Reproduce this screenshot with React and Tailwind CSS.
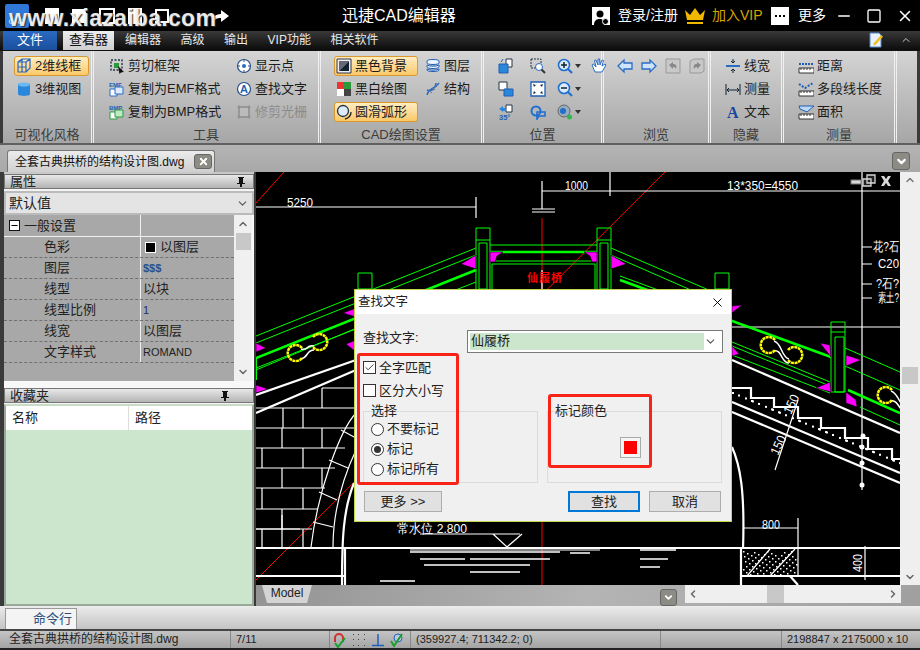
import React from "react";
import { ChevronDown, ChevronUp, ChevronRight, ChevronLeft, Check, X, Minus, Square } from "lucide-react";

const Pin = () => (
  <svg width="10" height="12" viewBox="0 0 10 12"><path d="M2 1h6v1H7v5h2v1H6v3H4V8H1V7h2V2H2z" fill="#111" /></svg>
);

const TabIcon = ({ children, size = 16 }) => (
  <svg width={size} height={size} viewBox="0 0 16 16" className="shrink-0">{children}</svg>
);

const icons = {
  wire: <TabIcon><path d="M2 4l4-3h8v9l-4 4H2zM2 4h8v10M10 4l4-3M2 9h8M6 1v13" fill="none" stroke="#2467c4" strokeWidth="1.2" /></TabIcon>,
  cyl: <TabIcon><path d="M2 3.5C2 1.5 14 1.5 14 3.5V13C14 15.5 2 15.5 2 13z" fill="#2a88dc" /><ellipse cx="8" cy="3.5" rx="6" ry="2" fill="#6bb9f2" /></TabIcon>,
  clip: <TabIcon><path d="M2 2h11v10H2z" fill="none" stroke="#234" strokeWidth="1.4" strokeDasharray="2 1.5" /><path d="M5 5h5v5H5z" fill="#2a9a3a" /><path d="M9 8l6 6-3 .5-1.5 1.5z" fill="#111" /></TabIcon>,
  emf: <TabIcon><text x="0" y="6" fontSize="6" fontWeight="700" fill="#1f5fb4">EMF</text><path d="M1 8h7v7H1z" fill="#fff" stroke="#2a6cc4" /><path d="M6 6h8v7H6z" fill="#dceafa" stroke="#2a6cc4" /></TabIcon>,
  bmp: <TabIcon><text x="0" y="6" fontSize="6" fontWeight="700" fill="#1f5fb4">BMP</text><path d="M1 8h7v7H1z" fill="#fff" stroke="#2a9a3a" /><path d="M6 6h8v7H6z" fill="#bfe8c4" stroke="#2a9a3a" /></TabIcon>,
  point: <TabIcon><circle cx="8" cy="8" r="6.5" fill="#fff" stroke="#274d86" strokeWidth="1.2" /><circle cx="8" cy="8" r="2" fill="#2a6cc4" /><path d="M8 1v3M8 12v3M1 8h3M12 8h3" stroke="#274d86" /></TabIcon>,
  find: <TabIcon><circle cx="8" cy="8" r="6.5" fill="#fff" stroke="#274d86" strokeWidth="1.2" /><text x="4" y="12" fontSize="11" fontWeight="700" fill="#1f5fb4">A</text></TabIcon>,
  raster: <TabIcon><path d="M3 3h10v10H3z" fill="#bbb" stroke="#888" /><path d="M1 3h14M1 13h14M3 1v14M13 1v14" stroke="#888" strokeWidth=".7" /></TabIcon>,
  black: <TabIcon><path d="M1 1h14v14H1z" fill="#eee" stroke="#334" /><path d="M3 3h10L3 13z" fill="#667" /><path d="M13 3v10H3z" fill="#123" /></TabIcon>,
  bw: <TabIcon><path d="M1 1h7v7H1z" fill="#e33" /><path d="M8 1h7v7H8z" fill="#2a9a3a" /><path d="M1 8h7v7H1z" fill="#fff" /><path d="M8 8h7v7H8z" fill="#444" /></TabIcon>,
  arc: <TabIcon><circle cx="7" cy="7" r="5.5" fill="#dceafa" stroke="#234" strokeWidth="1.3" /><path d="M15 8c0 4-2 6-6 7" fill="none" stroke="#222" strokeWidth="1.3" /></TabIcon>,
  layer: <TabIcon><path d="M2 3c0-2 12-2 12 0v2c0 2-12 2-12 0zM2 7c3 1.600 9 1.600 12 0v2c0 2-12 2-12 0zM2 11c3 1.600 9 1.600 12 0v1c0 2-12 2-12 0z" fill="#eef4fb" stroke="#1f5fb4" /></TabIcon>,
  dna: <TabIcon><path d="M2 14C4 6 8 10 14 2M2 9c5 2 8-1 9-7" fill="none" stroke="#2a6cc4" strokeWidth="1.4" /><path d="M4 10l3 2M7 7l3 2M10 4l2 2" stroke="#777" /></TabIcon>,
  lw: <TabIcon><path d="M8 1v4M8 11v4M6 3l2 2 2-2M6 13l2-2 2 2" fill="none" stroke="#123" /><path d="M1 7h14v2H1z" fill="#2a6cc4" /></TabIcon>,
  meas: <TabIcon><path d="M1 3v11M15 3v11M2 9h12M4 7L2 9l2 2M12 7l2 2-2 2" fill="none" stroke="#123" /></TabIcon>,
  text: <TabIcon><text x="2" y="14" fontSize="16" fontWeight="700" fontFamily="Liberation Serif" fill="#1746a0">A</text></TabIcon>,
  dist: <TabIcon><path d="M1 10h15v5H1z" fill="#fff" stroke="#333" /><path d="M3 10v2M6 10v2M9 10v2M12 10v2" stroke="#333" /><path d="M1 6h15" stroke="#1f5fb4" strokeWidth="2" strokeDasharray="2 1" /></TabIcon>,
  poly: <TabIcon><path d="M1 10h15v5H1z" fill="#fff" stroke="#333" /><path d="M3 10v2M6 10v2M9 10v2M12 10v2" stroke="#333" /><path d="M1 3l6 4 8-5" stroke="#1f5fb4" strokeWidth="2" strokeDasharray="2 1.500" fill="none" /></TabIcon>,
  area: <TabIcon><path d="M1 10h15v5H1z" fill="#fff" stroke="#333" /><path d="M3 10v2M6 10v2M9 10v2M12 10v2" stroke="#333" /><path d="M1 2h15l-7 6-7-3z" fill="#bcd8f6" stroke="#1f5fb4" /></TabIcon>,
  copyA: <TabIcon><path d="M8 1h6v8H8z" fill="#fff" stroke="#234" /><path d="M1 6h9v9H1z" fill="#2a88dc" stroke="#1f5fb4" /><path d="M3 4l2-3" stroke="#1f5fb4" /></TabIcon>,
  zoomW: <TabIcon><path d="M1 1h10v9H1z" fill="none" stroke="#234" strokeDasharray="2 1" /><circle cx="9" cy="9" r="3.500" fill="#fff" stroke="#2a6cc4" /><path d="M11.500 11.500L15 15" stroke="#333" strokeWidth="2" /></TabIcon>,
  zoomIn: <TabIcon><circle cx="7" cy="7" r="5.500" fill="#dceafa" stroke="#1f6fd0" strokeWidth="1.600" /><path d="M4 7h6M7 4v6" stroke="#123" strokeWidth="1.500" /><path d="M11 11l4 4" stroke="#1f6fd0" strokeWidth="2.200" /></TabIcon>,
  zoomOut: <TabIcon><circle cx="7" cy="7" r="5.500" fill="#dceafa" stroke="#1f6fd0" strokeWidth="1.600" /><path d="M4 7h6" stroke="#123" strokeWidth="1.500" /><path d="M11 11l4 4" stroke="#1f6fd0" strokeWidth="2.200" /></TabIcon>,
  hand: <TabIcon><path d="M4 14L1 7l1.500-1L5 9 3.500 2.500 5 2l2 5V1h1.500l.5 6 2-5 1.500.5L11 8l3-2 1 1-4 7z" fill="#fff" stroke="#2a6cc4" /></TabIcon>,
  copyB: <TabIcon><path d="M1 1h8v8H1z" fill="#fff" stroke="#234" /><path d="M6 8h9v7H6z" fill="#2a88dc" stroke="#1f5fb4" /></TabIcon>,
  fit: <TabIcon><path d="M1 1h14v14H1z" fill="#fff" stroke="#1f5fb4" strokeWidth="1.300" /><path d="M3 3l3 1-2 2zM13 3l-1 3-2-2zM3 13l1-3 2 2zM13 13l-3-1 2-2z" fill="#234" /></TabIcon>,
  rot: <TabIcon><path d="M8 1h6v7H8z" fill="#fff" stroke="#234" /><path d="M1 5l4-3v2h3v3H5v1z" fill="#2a88dc" /><text x="1" y="15.500" fontSize="7.500" fontWeight="700" fill="#1f5fb4">35°</text></TabIcon>,
  loop: <TabIcon><circle cx="6" cy="7" r="4.500" fill="none" stroke="#1f6fd0" strokeWidth="2" /><path d="M7 8h8v4H9l-2 3z" fill="none" stroke="#1f6fd0" strokeWidth="1.600" /></TabIcon>,
  globe: <TabIcon><circle cx="7" cy="7" r="6" fill="#9ab" stroke="#666" /><circle cx="6" cy="7" r="3" fill="#1f6fd0" /><circle cx="12.500" cy="13" r="2.500" fill="#2db84a" /></TabIcon>,
  left: <TabIcon><path d="M1 8l6-6v3h8v6H7v3z" fill="#cfe3fa" stroke="#2a6cc4" strokeWidth="1.300" /></TabIcon>,
  right: <TabIcon><path d="M15 8L9 2v3H1v6h8v3z" fill="#cfe3fa" stroke="#2a6cc4" strokeWidth="1.300" /></TabIcon>,
  undoG: <TabIcon><path d="M1 1h14v14H1z" fill="#c8c8c8" stroke="#999" /><path d="M4 7l4-3v2c3 0 4 2 3 5-1-2-2-2-3-2v2z" fill="#888" /></TabIcon>,
  redoG: <TabIcon><path d="M1 3l4-2h10v12l-3 2H1z" fill="#c8c8c8" stroke="#999" /><path d="M12 7L8 4v2C5 6 4 8 5 11c1-2 2-2 3-2v2z" fill="#888" /></TabIcon>,
};

const Tool = ({ icon, label, active, disabled, className = "" }) => (
  <div
    className={`flex items-center gap-[3px] h-[20px] mb-[3px] text-[13px] whitespace-nowrap ${
      active ? "rounded-[3px] border border-[#d89a30] bg-gradient-to-b from-[#ffedc0] to-[#fbc868] px-[1px]" : "px-[2px]"
    } ${disabled ? "text-[#8c8c8c]" : "text-[#1c1c1c]"} ${className}`}
  >
    {icons[icon]}
    <span>{label}</span>
  </div>
);

const Group = ({ label, width, children, className = "" }) => (
  <div className="flex flex-col shrink-0 border-r-[3px] border-double border-[#f0f0f0]" style={{ width }}>
    <div className={`h-[71px] pt-[5px] ${className}`}>{children}</div>
    <div className="h-[21px] text-center text-[13px] leading-[25px] text-[#3c3c3c]">{label}</div>
  </div>
);

const IconCell = ({ icon, caret, dim }) => (
  <div className={`flex items-center justify-start h-[23px] ${dim ? "opacity-90" : ""}`}>
    {icons[icon]}
    {caret && <span className="ml-[2px] border-x-[3.500px] border-t-[4px] border-x-transparent border-t-[#333]" />}
  </div>
);

function TitleBar() {
  return (
    <div className="relative h-[31px] bg-black flex items-center text-white">
      <div className="ml-[5px] w-[24px] h-[24px] rounded-[2px] bg-[#2f78d8] flex items-end justify-center text-[8px] leading-[12px] text-[#d8e8ff]">CAD</div>
      <div className="flex items-center gap-[13px] ml-[16px] text-white">
        <span className="w-[14px] h-[16px] bg-white" />
        <span className="w-[14px] h-[14px] bg-white" />
        <span className="w-[16px] h-[16px] border-2 border-white" />
        <span className="w-[14px] h-[16px] bg-white" />
        <span className="w-[14px] h-[14px] border-2 border-white" />
        <span className="w-[16px] h-[14px]" />
        <svg width="18" height="16" viewBox="0 0 18 16" className="mt-[2px]"><path d="M10 1l8 6-8 6V9C6 9 3 10 1 15 1 9 4 5 10 5z" fill="#fff" /></svg>
      </div>
      <span className="absolute left-[9px] top-[1px] text-[23px] font-bold text-white/90 tracking-[0.3px] [text-shadow:1px_1px_1px_#333]">www.xiazaiba.com</span>
      <span className="absolute left-[342px] top-[5px] text-[16px] leading-[22px]">迅捷CAD编辑器</span>
      <div className="ml-auto flex items-center h-full text-[14px]">
        <div className="w-[18px] h-[18px] bg-white flex items-end justify-center">
          <svg width="16" height="16" viewBox="0 0 16 16"><circle cx="7" cy="5" r="3.500" fill="#000" /><path d="M1 16c0-5 3-6 6-6s4 2 4 6z" fill="#000" /><circle cx="12.500" cy="12.500" r="3" fill="#000" stroke="#fff" /></svg>
        </div>
        <span className="ml-[8px] w-[66px]">登录/注册</span>
        <svg width="22" height="18" viewBox="0 0 22 18"><path d="M1 3l5 5 5-7 5 7 5-5-2 10H3z" fill="#f0b800" /><path d="M3 15h16v2H3z" fill="#f0b800" /></svg>
        <span className="ml-[6px] w-[59px] text-[#d8a400]">加入VIP</span>
        <div className="w-[18px] h-[18px] bg-white flex items-center justify-center gap-[2px]">
          <span className="w-[2px] h-[2px] bg-black" /><span className="w-[2px] h-[2px] bg-black" /><span className="w-[2px] h-[2px] bg-black" />
        </div>
        <span className="ml-[9px] w-[37px]">更多</span>
        <Minus size={18} strokeWidth={2} />
        <Square size={16} strokeWidth={2} className="ml-[13px]" />
        <X size={18} strokeWidth={2} className="ml-[14px] mr-[6px]" />
      </div>
    </div>
  );
}

function MenuBar() {
  return (
    <div className="h-[20px] flex items-end bg-gradient-to-b from-[#3a3a3a] to-[#0c0c0c] text-[13px] border-b border-[#111]">
      <div className="ml-[3px] w-[54px] h-[20px] bg-gradient-to-b from-[#2a6cc4] to-[#1a4f9c] text-white text-center leading-[20px]">文件</div>
      <div className="ml-[6px] w-[51px] h-[20px] bg-gradient-to-b from-[#f0f0f0] to-[#cfcfcf] text-[#111] text-center leading-[20px]">查看器</div>
      <div className="flex ml-[11px] gap-[19.500px] text-[12px] text-[#e8e8e8] leading-[20px] h-[20px]">
        <span>编辑器</span><span>高级</span><span>输出</span><span>VIP功能</span><span>相关软件</span>
      </div>
      <div className="ml-auto flex items-center h-[20px] mr-[8px] gap-[16px]">
        <svg width="16" height="16" viewBox="0 0 16 16"><path d="M2 1h9l2 2v12H2z" fill="#e8f0fc" stroke="#5a8ad0" /><path d="M5 12l8-9 2 1.500-8 9z" fill="#f0c020" /></svg>
        <ChevronUp size={12} className="text-[#c8c8c8]" />
      </div>
    </div>
  );
}

function Ribbon() {
  return (
    <div className="bg-[#3a3a3a] h-[94px] px-[3px] border-b-2 border-[#606060]">
      <div className="flex h-[92px] bg-gradient-to-b from-[#d4d4d4] to-[#a6a6a6] w-[914px]">
        <Group label="可视化风格" width={91} className="pl-[11px] pr-[2px]">
          <Tool icon="wire" label="2维线框" active />
          <Tool icon="cyl" label="3维视图" />
        </Group>
        <Group label="工具" width={227} className="pl-[13px] flex">
          <div className="w-[127px]">
            <Tool icon="clip" label="剪切框架" />
            <Tool icon="emf" label="复制为EMF格式" />
            <Tool icon="bmp" label="复制为BMP格式" />
          </div>
          <div>
            <Tool icon="point" label="显示点" />
            <Tool icon="find" label="查找文字" />
            <Tool icon="raster" label="修剪光栅" disabled />
          </div>
        </Group>
        <Group label="CAD绘图设置" width={163} className="pl-[13px] flex">
          <div className="w-[84px]">
            <Tool icon="black" label="黑色背景" active />
            <Tool icon="bw" label="黑白绘图" />
            <Tool icon="arc" label="圆滑弧形" active />
          </div>
          <div className="ml-[5px]">
            <Tool icon="layer" label="图层" />
            <Tool icon="dna" label="结构" />
          </div>
        </Group>
        <Group label="位置" width={120} className="pl-[14px] !pt-[3px] grid grid-cols-[32px_27px_34px_20px] content-start">
          <IconCell icon="copyA" /><IconCell icon="zoomW" /><IconCell icon="zoomIn" caret /><IconCell icon="hand" />
          <IconCell icon="copyB" /><IconCell icon="fit" /><IconCell icon="zoomOut" caret /><div />
          <IconCell icon="rot" /><IconCell icon="loop" /><IconCell icon="globe" caret /><div />
        </Group>
        <Group label="浏览" width={107} className="pl-[13px] !pt-[3px] flex gap-[8px] items-start">
          <IconCell icon="left" /><IconCell icon="right" /><IconCell icon="undoG" /><IconCell icon="redoG" />
        </Group>
        <Group label="隐藏" width={73} className="pl-[12px]">
          <Tool icon="lw" label="线宽" />
          <Tool icon="meas" label="测量" />
          <Tool icon="text" label="文本" />
        </Group>
        <Group label="测量" width={113} className="pl-[12px]">
          <Tool icon="dist" label="距离" />
          <Tool icon="poly" label="多段线长度" />
          <Tool icon="area" label="面积" />
        </Group>
      </div>
    </div>
  );
}

function DocTabs() {
  return (
    <div className="h-[27px] flex items-end bg-gradient-to-b from-[#b4b4b4] to-[#a8a8a8] pl-[7px] pr-[10px]">
      <div className="w-[208px] h-[22px] flex items-center justify-between border border-b-0 border-[#777] rounded-t-[3px] bg-gradient-to-b from-[#ececec] to-[#cfcfcf] pl-[7px] pr-[2px] text-[12px] text-[#111]">
        <span>全套古典拱桥的结构设计图.dwg</span>
        <span className="w-[18px] h-[15px] rounded-[3px] bg-[#8c8c84] border border-[#666] flex items-center justify-center">
          <X size={11} strokeWidth={4} className="text-white" />
        </span>
      </div>
      <span className="ml-auto mb-[2px] w-[18px] h-[18px] rounded-[3px] bg-[#8c8c84] border border-[#666] flex items-center justify-center">
        <ChevronDown size={13} strokeWidth={4} className="text-white" />
      </span>
    </div>
  );
}

const rows = [
  ["色彩", "以图层", "swatch"],
  ["图层", "$$$", "blue"],
  ["线型", "以块"],
  ["线型比例", "1", "navy"],
  ["线宽", "以图层"],
  ["文字样式", "ROMAND", "small"],
];

function PanelHeader({ title, pinRight }) {
  return (
    <div className="h-[15px] flex items-center justify-between border border-[#777] bg-gradient-to-b from-[#e8e8e8] to-[#b4b4b4] pl-[5px] text-[13px] leading-[15px] text-[#222]" style={{ paddingRight: pinRight }}>
      <span>{title}</span>
      <Pin />
    </div>
  );
}

function LeftPanel() {
  return (
    <div className="w-[250px] ml-[4px] mr-[2px] shrink-0 flex flex-col bg-[#f4f4f4]">
      <div className="bg-[#c8c8c8] pt-[2px]">
        <PanelHeader title="属性" pinRight={7} />
      </div>
      <div className="h-[24px] mt-[2px] flex items-center justify-between bg-[#e4e4e4] border-2 border-[#bbb] px-[3px] text-[14px] text-[#222]">
        <span>默认值</span>
        <ChevronDown size={13} className="text-[#555]" />
      </div>
      <div className="h-[166px] flex">
        <div className="w-[230px] bg-[#a8a8a8] text-[13px] text-[#222]">
          <div className="h-[22px] flex border-b border-[#f0f0f0]">
            <div className="w-[137px] flex items-center border-r border-[#f0f0f0]">
              <span className="ml-[5px] w-[11px] h-[11px] border border-[#111] bg-white flex items-center justify-center"><Minus size={9} strokeWidth={3} className="text-black" /></span>
              <span className="ml-[4px]">一般设置</span>
            </div>
          </div>
          {rows.map(([k, v, kind]) => (
            <div key={k} className="h-[21px] flex border-b border-dashed border-[#707070]">
              <div className="w-[137px] pl-[40px] leading-[20px] border-r border-solid border-[#f0f0f0]">{k}</div>
              <div className={`pl-[2px] leading-[20px] flex items-center gap-[4px] ${kind === "blue" ? "text-[#28508c] text-[11px] font-bold" : ""} ${kind === "navy" ? "text-[#1c2c70] text-[11px]" : ""} ${kind === "small" ? "text-[11px]" : ""}`}>
                {kind === "swatch" && <span className="ml-[2px] w-[11px] h-[11px] bg-black border border-white" />}
                {v}
              </div>
            </div>
          ))}
        </div>
        <div className="w-[18px] bg-[#f0f0f0] flex flex-col items-center justify-between py-[3px]">
          <ChevronUp size={12} strokeWidth={3} className="text-[#666]" />
          <span className="w-[15px] h-[17px] -mt-[113px] bg-[#c8c8c8]" />
          <ChevronDown size={12} strokeWidth={3} className="text-[#666]" />
        </div>
        <div className="w-[2px] bg-[#f8f8f8]" />
      </div>
      <div className="h-[7px] bg-[#f8f8f8]" />
      <PanelHeader title="收藏夹" pinRight={23} />
      <div className="flex-1 mt-[1px] flex flex-col border-2 border-[#9aa89a] border-t-[#c8dcc8] bg-[#cbe6cc]">
        <div className="h-[24px] flex bg-white text-[13px] text-[#222] leading-[24px]">
          <div className="w-[123px] pl-[6px] border-r border-[#ddd]">名称</div>
          <div className="pl-[6px]">路径</div>
        </div>
      </div>
    </div>
  );
}

// bricks on the left pier of the bridge
const brickLines = [
  [[256, 408], [356, 408]], [[256, 428], [356, 428]], [[256, 448], [345, 448]],
  [[256, 468], [335, 468]], [[256, 488], [325, 488]], [[256, 509], [318, 509]], [[256, 529], [312, 529]],
  [[322, 388], [356, 388]],
  [[322, 388], [322, 408]], [[283, 408], [283, 428]], [[303, 408], [303, 428]],
  [[282, 428], [282, 448]], [[322, 428], [322, 448]], [[262, 448], [262, 468]], [[303, 448], [303, 468]],
  [[282, 468], [282, 488]], [[322, 468], [322, 488]], [[262, 488], [262, 509]], [[303, 488], [303, 509]],
  [[282, 509], [282, 529]], [[262, 529], [262, 548]], [[303, 529], [303, 548]],
];

const p = (pts) => "M" + pts.map((a) => a.join(" ")).join("L");

const speckles = Array.from({ length: 70 }, (_, i) => [743 + ((i * 37) % 54), 551 + ((i * 23) % 24)]);
const stairDots = Array.from({ length: 36 }, (_, i) => [732 + ((i * 47) % 168), 392 + ((i * 47) % 168) * 0.42 + ((i * 13) % 13)]);

const oval = (x1, y1, x2, y2) => (
  <g fill="none" key={x1}>
    <path d={`M${x1 + 6} ${y1 - 4}C${x1 + 14} ${y1 - 2} ${x2 - 14} ${y2 + 2} ${x2 - 6} ${y2 + 4}M${x1 + 6} ${y1 + 6}C${x1 + 14} ${y1 + 4} ${x2 - 14} ${y2 + 8} ${x2 - 6} ${y2 + 8}`} stroke="#fff" strokeWidth="1.500" />
    <path d={`M${x1 + 7} ${y1 - 5}A8 8 0 1 0 ${x1 + 7} ${y1 + 5}`} stroke="#ff0" strokeWidth="2.500" strokeDasharray="3 .6" />
    <path d={`M${x2 - 7} ${y2 - 5}A8 8 0 1 1 ${x2 - 7} ${y2 + 5}`} stroke="#ff0" strokeWidth="2.500" strokeDasharray="3 .6" />
  </g>
);

function Drawing() {
  return (
    <svg viewBox="256 172 644 413" width="644" height="413" className="block font-['Liberation_Sans']">
      <rect x="256" y="172" width="644" height="413" fill="#000" />
      {/* red construction lines */}
      <path d="M256 580L665 172M256 203L284 172M542 218V585" stroke="#f00" fill="none" />
      {/* dimensions */}
      <path d="M256 207H476M476 197V218M542 191H900M542 181V209M610 172V196M532 209H555M532 212H555M542 270V289M862 172V490M862 247H872M862 264H872M862 284H872M862 298H872M732 327H900" stroke="#fff" fill="none" strokeWidth="1.200" />
      <g fill="#fff" fontSize="13" className="select-none">
        <text x="287" y="207" textLength="26" lengthAdjust="spacingAndGlyphs">5250</text>
        <text x="565" y="190" textLength="23" lengthAdjust="spacingAndGlyphs">1000</text>
        <text x="727" y="190" textLength="71" lengthAdjust="spacingAndGlyphs">13*350=4550</text>
        <text x="873" y="251" textLength="26" lengthAdjust="spacingAndGlyphs">花?石</text>
        <text x="878" y="268" textLength="21" lengthAdjust="spacingAndGlyphs">C20</text>
        <text x="876" y="288" textLength="23" lengthAdjust="spacingAndGlyphs">?石?</text>
        <text x="878" y="302" textLength="21" lengthAdjust="spacingAndGlyphs">素土?</text>
        <text x="762" y="529" textLength="18" lengthAdjust="spacingAndGlyphs">800</text>
        <text x="397" y="533" textLength="70" lengthAdjust="spacingAndGlyphs">常水位 2.800</text>
        <text transform="translate(862 572) rotate(-90)" textLength="18" lengthAdjust="spacingAndGlyphs">400</text>
        <text transform="translate(791 415) rotate(-65)" textLength="20" lengthAdjust="spacingAndGlyphs">150</text>
        <text transform="translate(778 456) rotate(-65)" textLength="20" lengthAdjust="spacingAndGlyphs">150</text>
      </g>
      <text x="527" y="282" fill="#f00" fontSize="11" fontWeight="700" fontFamily="Noto Sans CJK SC" textLength="35">仙履桥</text>
      {/* parapet */}
      <g stroke="#0f0" fill="none" strokeWidth="1">
        <path d="M476 228h14v12h-14zM479 243h8v46h-8zM476 240v49M490 240v49" />
        <path d="M597 228h14v12h-14zM600 243h8v46h-8zM597 240v49M611 240v49" />
        <path d="M358 273h14v16h-14zM715 273h14v16h-14zM490 245H597M490 261H597M492 264H595M492 264V289M595 264V289" />
        <path d="M476 248L256 336M476 255L256 343M476 282L256 368M400 310L256 370M611 248L732 300M611 255L732 308M620 276L732 317M732 342L830 382M732 346L830 386M732 355L830 393M845 348L900 372M845 366L900 390M860 407L900 425" />
        <path d="M831 322h14v70h-14zM835 337h9v55h-9zM831 332h14" />
        <path d="M256 357V380" strokeWidth="2" />
      </g>
      <g stroke="#0f0" fill="none" strokeWidth="2.500">
        <path d="M490 252H597M476 270L256 358M620 280L831 357M848 390L900 413" />
      </g>
      {/* corner brackets */}
      <g fill="#f0f" stroke="#000" strokeWidth=".6">
        <path d="M490 252h13l-6 4-2 6-5 0zM597 252h-13l6 4 2 6 5 0zM476 255l-15 9 15 5zM611 255l15 9-15 5z" />
        <path d="M256 343l10 5-10 4zM256 385l12 4-12 4zM343 313l13-5v9zM346 344l10-4v12zM732 306l10-1-10 8zM732 346l7 8-7 2zM820 343l10 2 1 12zM846 355l15 5-15 6zM816 388l14-6 1 10zM846 392l10 8 1 7-11-4z" />
      </g>
      {oval(295, 353, 320, 342)}
      {oval(768, 345, 795, 355)}
      {oval(885, 395, 915, 408)}
      {/* stone work */}
      <g stroke="#fff" fill="none" strokeWidth="1.200">
        <path d={brickLines.map(p).join("")} />
        <path d="M356 413C340 430 318 490 311 547M356 450C342 480 333 510 333 547M341 430L356 438M329 460L348 468M319 492L337 500M313 522L333 527" />
        <path d="M798 518V576M743 528H798M865 546V580M282 515V549M256 529H300M798 400L775 470M410 550H600M420 534H520M493 534L507 547L522 534" />
        <path d="M741 549V576H798M747 576L770 549M770 576L795 549" />
      </g>
      <g stroke="#fff" fill="none" strokeWidth="2.200">
        <path d="M256 395L356 360M256 413L356 370M732 360L900 433M732 402L900 473M732 412L900 483" />
        <path d="M732 388H751V398H774V407H798V418H821V428H845V438H868V449H892V459H900" />
        <path d="M256 548H900M256 576H345M741 576H900M354 483C343 510 342 540 342 585M732 447C740 465 745 490 743 549M741 549V585M345 549V585M790 576L798 585" />
        <path d="M410 552H560M420 559H465M470 559H550M570 553H590M640 550H676M640 559H668M424 565H530M640 567H660M470 572H520M380 581H415" strokeWidth="1.300" />
      </g>
      <g fill="#fff">
        {speckles.map(([x, y], i) => <rect key={i} x={x} y={y} width="1.500" height="1.500" />)}
        {stairDots.map(([x, y], i) => <rect key={i} x={x} y={y} width="2" height="2" />)}
        <circle cx="863" cy="436" r="2.500" /><circle cx="862" cy="447" r="2.500" /><circle cx="862" cy="463" r="2.500" /><circle cx="862" cy="485" r="2.500" />
      </g>
      {/* drawing window buttons */}
      <g>
        <rect x="851" y="180" width="10" height="4" fill="#d8d8d8" stroke="#777" />
        <path d="M867 175h8v8h-8zM863 179h8v7h-8z" fill="#222" stroke="#d8d8d8" strokeWidth="1.300" />
        <path d="M881 176l3 0 2 3 2-3 3 0-3 5 3 5-3 0-2-3-2 3-3 0 3-5z" fill="#d8d8d8" />
      </g>
    </svg>
  );
}

function CanvasArea() {
  return (
    <div className="flex-1 flex flex-col bg-[#a0a0a0]">
      <div className="flex h-[413px]">
        <Drawing />
        <div className="w-[20px] bg-[#efefef] flex flex-col items-center justify-between py-[2px]">
          <ChevronUp size={12} strokeWidth={3} className="text-[#777]" />
          <span className="w-[16px] h-[17px] -mt-[6px] bg-[#c8c8c8]" />
          <ChevronDown size={12} strokeWidth={3} className="text-[#666]" />
        </div>
      </div>
      <div className="flex-1 flex bg-gradient-to-r from-[#949494] via-[#b4b4b4] to-[#a0a0a0]">
        <div className="ml-[6px] w-[50px] h-[18px] bg-[#d4d4d4] [clip-path:polygon(0_0,100%_0,90%_100%,10%_100%)] text-center text-[12px] leading-[17px] text-[#222]">Model</div>
        <span className="ml-[348px] mt-[4px] w-[17px] h-[17px] rounded-[3px] bg-[#8c8c84] border border-[#666] flex items-center justify-center">
          <ChevronDown size={11} strokeWidth={4} className="text-white" />
        </span>
        <div className="ml-[8px] w-[216px] h-[18px] bg-[#efefef] flex items-center justify-between px-[2px]">
          <ChevronLeft size={12} strokeWidth={3} className="text-[#666]" />
          <span className="w-[17px] h-[18px] ml-[68px] bg-[#c8c8c8]" />
          <ChevronRight size={12} strokeWidth={3} className="ml-auto text-[#666]" />
        </div>
      </div>
    </div>
  );
}

const Radio = ({ on, label }) => (
  <div className="flex items-center h-[20px] gap-[3px]">
    <span className="w-[13px] h-[13px] rounded-full border border-[#333] bg-white flex items-center justify-center">
      {on && <span className="w-[7px] h-[7px] rounded-full bg-[#333]" />}
    </span>
    <span>{label}</span>
  </div>
);

const Checkbox = ({ on, label }) => (
  <div className="flex items-center h-[23px] gap-[3px]">
    <span className="w-[13px] h-[13px] border border-[#333] bg-white flex items-center justify-center">
      {on && <Check size={11} strokeWidth={2} className="text-[#333]" />}
    </span>
    <span>{label}</span>
  </div>
);

function FindDialog() {
  return (
    <div className="absolute left-[354px] top-[289px] w-[378px] h-[233px] border border-[#c4d44c] bg-[#f0f0f0] text-[13px] text-[#222]">
      <div className="h-[24px] bg-white flex items-center justify-between pl-[3px] pr-[6px] text-[12.500px]">
        <span>查找文字</span>
        <X size={15} strokeWidth={1.500} className="text-black" />
      </div>
      <div className="px-[8px]">
        <div className="flex items-center mt-[16px] h-[23px] relative">
          <span className="w-[104px] -mt-[7px]">查找文字:</span>
          <div className="w-[256px] h-[23px] border border-[#7a7a7a] bg-white flex items-center justify-between pl-[2px] pr-[5px]">
            <span className="w-[234px] h-[17px] bg-[#cbe6cc] leading-[15px] pl-[1px]">仙履桥</span>
            <ChevronDown size={13} className="text-[#555]" />
          </div>
        </div>
        <div className="mt-[3px]">
          <Checkbox on label="全字匹配" />
          <Checkbox label="区分大小写" />
        </div>
        <div className="flex mt-[9px] gap-[9px]">
          <div className="relative w-[175px] h-[72px] border border-[#dcdcdc] pl-[7px] pt-[7px]">
            <span className="absolute left-[7px] -top-[10px] leading-[18px]">选择</span>
            <Radio label="不要标记" />
            <Radio on label="标记" />
            <Radio label="标记所有" />
          </div>
          <div className="relative w-[175px] h-[72px] border border-[#dcdcdc]">
            <span className="absolute left-[7px] -top-[10px] leading-[18px]">标记颜色</span>
            <div className="absolute left-[72px] top-[25px] w-[21px] h-[21px] border border-[#aaa] bg-[#f4f4f4] flex items-center justify-center">
              <span className="w-[13px] h-[13px] bg-[#f00]" />
            </div>
          </div>
        </div>
        <div className="flex mt-[8px] text-center leading-[19px]">
          <div className="ml-[1px] w-[78px] h-[21px] border border-[#adadad] bg-[#e1e1e1]">更多 &gt;&gt;</div>
          <div className="ml-[126px] w-[72px] h-[21px] border-2 border-[#0078d7] bg-[#e1e1e1] leading-[17px]">查找</div>
          <div className="ml-[9px] w-[72px] h-[21px] border border-[#adadad] bg-[#e1e1e1]">取消</div>
        </div>
      </div>
      {/* red marks added over the screenshot */}
      <div className="absolute left-[2px] top-[63px] w-[102px] h-[132px] rounded-[3px] border-[3px] border-[#f92418]" />
      <div className="absolute left-[193px] top-[104px] w-[104px] h-[74px] rounded-[3px] border-[3px] border-[#f92418]" />
    </div>
  );
}

function StatusBar() {
  return (
    <div className="h-[21px] flex bg-gradient-to-b from-[#c4c4c4] to-[#a4a4a4] border-t-2 border-b-2 border-t-[#444] border-b-[#222] text-[12px] leading-[17px] text-[#222]">
      <div className="w-[231px] pl-[9px] border-r border-[#888]">全套古典拱桥的结构设计图.dwg</div>
      <div className="w-[99px] pl-[5px] border-r border-[#888] text-[11px]">7/11</div>
      <div className="w-[81px] flex items-center gap-[3px] pl-[2px] border-r border-[#888]">
        <svg width="16" height="16" viewBox="0 0 16 16"><path d="M3 10V6a4 4 0 018 0v4" fill="none" stroke="#d03030" strokeWidth="2" /><path d="M3 11l3 4 7-9" fill="none" stroke="#18a030" strokeWidth="2" /></svg>
        <svg width="16" height="16" viewBox="0 0 16 16"><path d="M2 2h1v1H2zM7 2h1v1H7zM13 2h1v1h-1zM2 7h1v1H2zM7 7h1v1H7zM13 7h1v1h-1zM2 13h1v1H2zM7 13h1v1H7zM13 13h1v1h-1z" fill="#444" /></svg>
        <svg width="16" height="16" viewBox="0 0 16 16"><path d="M8 2v11M2 13.500h12" stroke="#2060c0" strokeWidth="1.500" /></svg>
        <svg width="16" height="16" viewBox="0 0 16 16"><circle cx="9" cy="6" r="4" fill="#bcd" stroke="#2060c0" /><path d="M2 9l3 5 8-12" fill="none" stroke="#18a030" strokeWidth="2" /></svg>
      </div>
      <div className="w-[250px] pl-[5px] border-r border-[#888] text-[11px]">(359927.4; 711342.2; 0)</div>
      <div className="w-[121px] border-r border-[#888]" />
      <div className="pl-[5px] text-[11px]">2198847 x 2175000 x 10</div>
    </div>
  );
}

export default function App() {
  return (
    <div className="relative w-[920px] h-[650px] overflow-hidden flex flex-col bg-[#3a3a3a] font-['Liberation_Sans','Noto_Sans_CJK_SC',sans-serif]">
      <TitleBar />
      <MenuBar />
      <Ribbon />
      <DocTabs />
      <div className="h-[434px] flex">
        <LeftPanel />
        <CanvasArea />
      </div>
      <div className="h-[23px] flex items-end bg-gradient-to-b from-[#ececec] to-[#c4c4c4] pl-[5px]">
        <div className="w-[72px] h-[21px] bg-[#f4f4f4] border border-b-0 border-[#999] pl-[27px] text-[13px] leading-[19px] text-[#30507c]">命令行</div>
      </div>
      <StatusBar />
      <FindDialog />
    </div>
  );
}
